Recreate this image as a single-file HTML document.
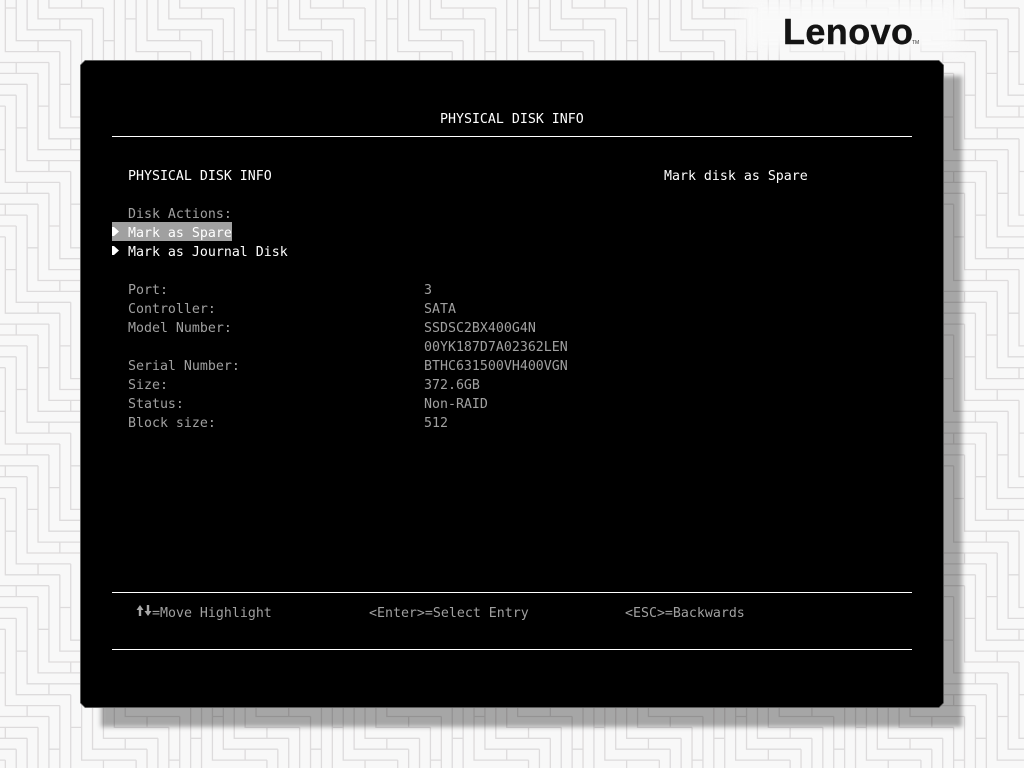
<!DOCTYPE html>
<html><head><meta charset="utf-8"><title>Physical Disk Info</title>
<style>
html,body{margin:0;padding:0;width:1024px;height:768px;overflow:hidden;background:#f8f8f8}
#wrap{position:relative;width:1024px;height:768px;overflow:hidden;background:#f8f8f8}
#bg{position:absolute;left:0;top:0}
#fade{position:absolute;left:744px;top:2px;width:216px;height:48px;background:#f9f9f9;filter:blur(8px)}
#shadow{position:absolute;left:101px;top:76px;width:861px;height:651px;background:rgba(0,0,0,.33);filter:blur(2.5px)}
#panelb{position:absolute;left:80px;top:60px;width:864px;height:648px;background:#5c5c5c;clip-path:polygon(5px 0,859px 0,864px 5px,864px 643px,859px 648px,5px 648px,0 643px,0 5px)}
#panel{position:absolute;left:81px;top:61px;width:862px;height:646px;background:#000;clip-path:polygon(4px 0,858px 0,862px 4px,862px 642px,858px 646px,4px 646px,0 642px,0 4px)}
.hr{position:absolute;left:112px;width:800px;height:1px;background:#fff}
.t{position:absolute;font-family:"DejaVu Sans Mono","Liberation Mono",monospace;font-size:13.28px;line-height:19px;height:19px;white-space:pre;color:#a0a0a0}
.w{color:#fff}
#sel{position:absolute;left:112px;top:222px;width:120px;height:19px;background:#a0a0a0}
.tri{position:absolute;left:112px}
#logo{position:absolute;left:783px;top:11px;font-family:"Liberation Sans",sans-serif;font-weight:700;font-size:36px;letter-spacing:.4px;line-height:42px;color:#141414;white-space:pre;-webkit-text-stroke:.4px #141414}
#tm{position:absolute;left:912px;top:40px;font-family:"Liberation Sans",sans-serif;font-size:5px;line-height:6px;color:#333}
#arrows{position:absolute;left:136px;top:604px}
</style></head><body><div id="wrap">
<svg id="bg" width="1024" height="768" viewBox="0 0 1024 768" xmlns="http://www.w3.org/2000/svg">
<defs>
<path id="z" d="M0 9V16H5M1 8V15H6M2 7V14H7M3 6V13H8M4 5V12H9M5 4V11H10M6 3V10H11M7 2V9H12M8 1V8H13M9 0V7H14M10 11V18H15M11 10V17H16"/>
<path id="k" d="M1 5v1M3 3v1M5 1v1M7 23v1M9 21v1M11 19v1M13 17v1M15 15v1M17 13v1M19 11v1M21 9v1M23 7v1M0 18v1M2 16v1M4 14v1M6 12v1M8 10v1M10 8v1M12 6v1M14 4v1M16 2v1M18 0v1M20 22v1M22 20v1M11 1h1M9 3h1M7 5h1M5 7h1M3 9h1M1 11h1M23 13h1M21 15h1M19 17h1M17 19h1M15 21h1M13 23h1M0 0h1M22 2h1M20 4h1M18 6h1M16 8h1M14 10h1M12 12h1M10 14h1M8 16h1M6 18h1M4 20h1M2 22h1"/>
<g id="T"><use href="#z"/><use href="#z" x="12"/><use href="#z" y="12"/><use href="#z" x="12" y="12"/><use href="#k"/></g>
</defs>
<g transform="translate(5.33 8) scale(10.9)" fill="none" stroke="#dddbdc" stroke-width=".12" stroke-linecap="butt">
<use href="#T" x="-24" y="-24"/><use href="#T" x="0" y="-24"/><use href="#T" x="24" y="-24"/><use href="#T" x="48" y="-24"/><use href="#T" x="72" y="-24"/><use href="#T" x="96" y="-24"/>
<use href="#T" x="-24" y="0"/><use href="#T" x="0" y="0"/><use href="#T" x="24" y="0"/><use href="#T" x="48" y="0"/><use href="#T" x="72" y="0"/><use href="#T" x="96" y="0"/>
<use href="#T" x="-24" y="24"/><use href="#T" x="0" y="24"/><use href="#T" x="24" y="24"/><use href="#T" x="48" y="24"/><use href="#T" x="72" y="24"/><use href="#T" x="96" y="24"/>
<use href="#T" x="-24" y="48"/><use href="#T" x="0" y="48"/><use href="#T" x="24" y="48"/><use href="#T" x="48" y="48"/><use href="#T" x="72" y="48"/><use href="#T" x="96" y="48"/>
</g>
</svg>
<div id="fade"></div>
<div id="shadow"></div>
<div id="panelb"></div>
<div id="panel"></div>
<div id="logo">Lenovo</div>
<div id="tm">TM</div>

<div class="t w" style="left:440px;top:110px">PHYSICAL DISK INFO</div>
<div class="hr" style="top:136px"></div>
<div class="t w" style="left:128px;top:167px">PHYSICAL DISK INFO</div>
<div class="t w" style="left:664px;top:167px">Mark disk as Spare</div>
<div class="t" style="left:128px;top:205px">Disk Actions:</div>
<div id="sel"></div>
<svg class="tri" style="top:227px" width="8" height="10" viewBox="0 0 8 10" fill="#fff"><path d="M0 0L2 0L7 4.500L2 9L0 9Z"/></svg>
<div class="t w" style="left:128px;top:224px">Mark as Spare</div>
<svg class="tri" style="top:246px" width="8" height="10" viewBox="0 0 8 10" fill="#fff"><path d="M0 0L2 0L7 4.500L2 9L0 9Z"/></svg>
<div class="t w" style="left:128px;top:243px">Mark as Journal Disk</div>

<div class="t" style="left:128px;top:281px">Port:</div><div class="t" style="left:424px;top:281px">3</div>
<div class="t" style="left:128px;top:300px">Controller:</div><div class="t" style="left:424px;top:300px">SATA</div>
<div class="t" style="left:128px;top:319px">Model Number:</div><div class="t" style="left:424px;top:319px">SSDSC2BX400G4N</div>
<div class="t" style="left:424px;top:338px">00YK187D7A02362LEN</div>
<div class="t" style="left:128px;top:357px">Serial Number:</div><div class="t" style="left:424px;top:357px">BTHC631500VH400VGN</div>
<div class="t" style="left:128px;top:376px">Size:</div><div class="t" style="left:424px;top:376px">372.6GB</div>
<div class="t" style="left:128px;top:395px">Status:</div><div class="t" style="left:424px;top:395px">Non-RAID</div>
<div class="t" style="left:128px;top:414px">Block size:</div><div class="t" style="left:424px;top:414px">512</div>

<div class="hr" style="top:592px"></div>
<svg id="arrows" width="16" height="14" viewBox="0 0 16 14" fill="#a8a8a8"><path d="M4 1L7.5 6H5.2V12H2.8V6H.5Z"/><path d="M12 12L8.5 7H10.800V1H13.200V7H15.500Z"/></svg>
<div class="t" style="left:152px;top:604px">=Move Highlight</div>
<div class="t" style="left:369px;top:604px">&lt;Enter&gt;=Select Entry</div>
<div class="t" style="left:625px;top:604px">&lt;ESC&gt;=Backwards</div>
<div class="hr" style="top:649px"></div>
</div></body></html>
